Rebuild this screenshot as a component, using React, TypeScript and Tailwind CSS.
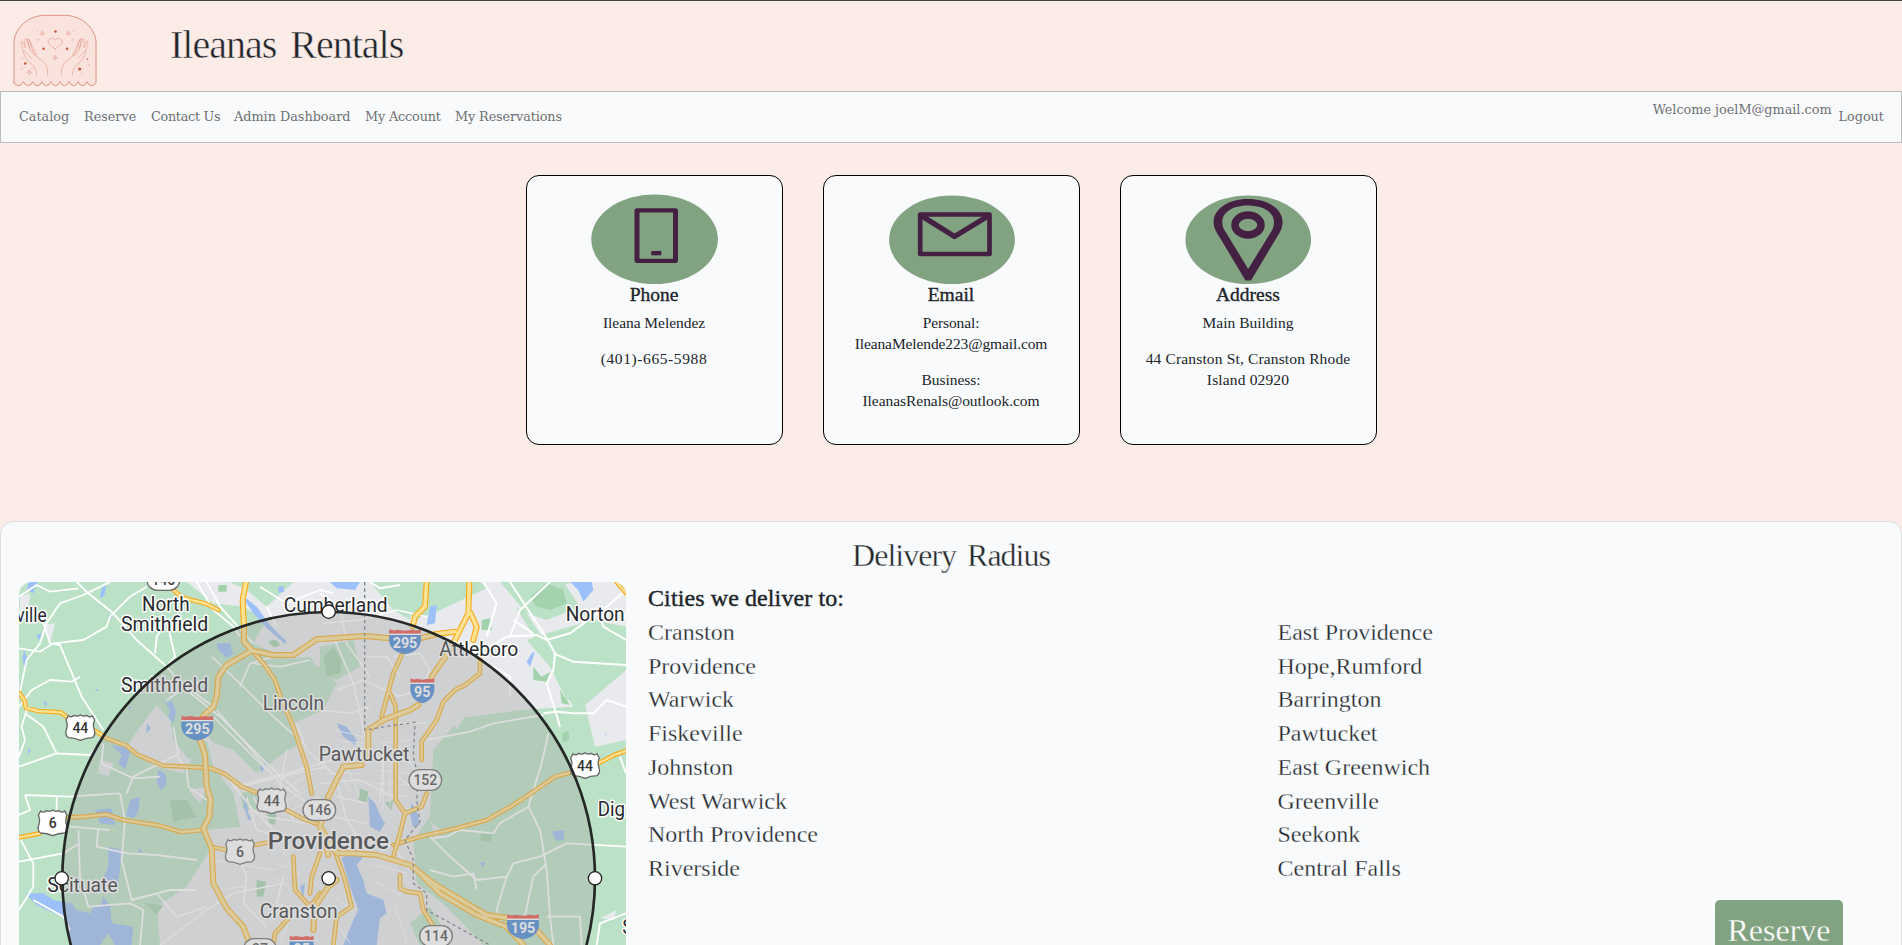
import React from "react";

const leftCities = ["Cranston", "Providence", "Warwick", "Fiskeville", "Johnston", "West Warwick", "North Providence", "Riverside"];
const rightCities = ["East Providence", "Hope,Rumford", "Barrington", "Pawtucket", "East Greenwich", "Greenville", "Seekonk", "Central Falls"];

function Hand() {
  return (
    <g>
      <path d="M111 224 C111 206 101 196 90 187 C76 174 71 160 68 142 C64 132 63 123 67 122 C71 123 72 133 76 141" />
      <path d="M144 224 C146 203 139 189 124 179 C112 172 104 163 98 149 C93 137 91 121 87 117 C83 117 86 130 90 144" />
      <path d="M76 141 C76 130 74 116 79 114 C83 116 84 132 90 146 C95 158 101 163 109 166 M81 118 C88 112 91 122 97 137 C102 149 107 157 110 163 M74 151 C81 161 88 166 95 174" />
    </g>
  );
}

function Logo() {
  return (
    <svg viewBox="40 42 253 218" className="h-[73px] w-[84px] shrink-0" fill="none" stroke="#df9c8d" strokeWidth="2" strokeLinecap="round">
      <path
        d="M43 248 V120 C50 80 84 48 132 45 H202 C250 49 283 80 290 120 V248 Q286 257 277 257 Q267 256 263 245 Q258 257 249 257 Q239 256 236 245 Q232 257 222 257 Q212 256 209 245 Q204 257 195 257 Q185 256 181 245 Q177 257 168 257 Q158 256 154 245 Q150 257 141 257 Q131 256 127 245 Q123 257 114 257 Q103 256 99 245 Q95 257 87 257 Q76 256 71 245 Q66 257 57 257 Q47 257 43 248 Z"
        fill="#fbe3dd"
        stroke="#d88472"
        strokeWidth="2.6"
      />
      <Hand />
      <g transform="translate(330 0) scale(-1 1)">
        <Hand />
      </g>
      <path d="M167 146 C156 138 146 133 146 124 C147 113 163 111 167 120 C172 111 187 113 188 124 C188 133 177 140 167 146 Z" />
      <g stroke="none" fill="#cb513c">
        <circle cx="168" cy="94" r="3.8" />
        <circle cx="132" cy="146" r="3.8" />
        <circle cx="203" cy="146" r="3.8" />
        <circle cx="77" cy="190" r="3.8" />
        <circle cx="241" cy="207" r="4.6" />
        <circle cx="264" cy="177" r="3" fill="#dc8d7c" />
      </g>
      <path d="M128 93 l2 5 5 2 -5 2 -2 5 -2 -5 -5 -2 5 -2z M207 93 l2 5 5 2 -5 2 -2 5 -2 -5 -5 -2 5 -2z M167 166 l2 5 5 2 -5 2 -2 5 -2 -5 -5 -2 5 -2z M89 210 l2 5 5 2 -5 2 -2 5 -2 -5 -5 -2 5 -2z" strokeWidth="1.8" />
      <path d="M113 92v2 M223 92v2 M112 119h6 M217 119h6 M67 175h3 M64 206h4 M96 205h2 M246 220h4 M266 194h4 M237 191h2" stroke="#e5a395" />
    </svg>
  );
}

function PhoneIcon() {
  return (
    <svg viewBox="0 0 127 90" className="h-[90px] w-[127px]">
      <ellipse cx="63.6" cy="45.3" rx="63.3" ry="44.9" fill="#82a382" />
      <path fillRule="evenodd" fill="#442142" d="M46 14.300 H84.500 Q87 14.300 87 17 V66 Q87 69 84.500 69 H46 Q43.500 69 43.500 66 V17 Q43.500 14.300 46 14.300 Z M48.500 18.500 V64.700 H82 V18.500 Z" />
      <rect x="60.300" y="57" width="10" height="4.300" fill="#442142" />
    </svg>
  );
}

function EmailIcon() {
  return (
    <svg viewBox="0 0 126 90" className="ml-px h-[90px] w-[126px]">
      <ellipse cx="63" cy="45.700" rx="62.900" ry="44.300" fill="#82a382" />
      <g fill="none" stroke="#442142" strokeLinejoin="round">
        <rect x="31.200" y="20.500" width="69.300" height="39.500" strokeWidth="4.700" />
        <path d="M32 21.500 L65.500 42.500 L100 21.500" strokeWidth="5.300" />
      </g>
    </svg>
  );
}

function PinIcon() {
  return (
    <svg viewBox="0 0 126 90" className="h-[90px] w-[126px]">
      <ellipse cx="63.200" cy="45.700" rx="62.800" ry="44.300" fill="#82a382" />
      <path d="M60.500 86.500 L34.500 43 C31.500 38.500 28.600 34 28.600 28 C28.600 15 43 5 63 5 C83 5 97.600 15 97.600 28 C97.600 34 95 38 92 43 L66 86.500 Z M63.200 75 L86 38 C88 35 89 32 89 28 C89 18 78 11.500 63 11.500 C48 11.500 37.300 18 37.300 28 C37.300 32 38.500 35 41 38.500 Z" fill="#442142" fillRule="evenodd" />
      <ellipse cx="63" cy="31" rx="13" ry="10" fill="none" stroke="#442142" strokeWidth="7.500" />
    </svg>
  );
}

function Roads({ d, w = 13 }: { d: string; w?: number }) {
  return (
    <g fill="none" strokeLinejoin="round" strokeLinecap="round">
      <path d={d} stroke="#f8ab1c" strokeWidth={w + 7} />
      <path d={d} stroke="#fde293" strokeWidth={w} />
    </g>
  );
}

function Us({ x, y, n }: { x: number; y: number; n: string }) {
  return (
    <g transform={`translate(${x} ${y})`}>
      <path d="M-36 -37 Q-27 -30 -19 -38 Q-9 -33 0 -40 Q9 -33 19 -38 Q27 -30 36 -37 L43 -24 Q36 -10 42 5 Q47 22 36 29 Q17 30 0 37 Q-17 30 -36 29 Q-47 22 -42 5 Q-36 -10 -43 -24 Z" fill="#fff" stroke="#666" strokeWidth="4" />
      <text y="14" textAnchor="middle" fontSize="42" fontWeight="500" fill="#333">{n}</text>
    </g>
  );
}

function Interstate({ x, y, n }: { x: number; y: number; n: string }) {
  const wide = n.length > 2;
  return (
    <g transform={`translate(${x} ${y})`}>
      <g transform={wide ? undefined : "scale(.75 1)"}>
        <path d="M-47 -23 H47 C53 6 38 28 0 35 C-38 28 -53 6 -47 -23 Z" fill="#4285d6" />
        <path d="M-47 -40 Q-32 -34 -23 -39 L0 -36 L23 -39 Q34 -34 47 -40 L48 -27 H-48 Z" fill="#ea4b45" />
        <path d="M-48 -25 H48" stroke="#fff" strokeWidth="4" />
      </g>
      <text y="16" textAnchor="middle" fontSize="43" fontWeight="700" fill="#fff">{n}</text>
    </g>
  );
}

function StateRoute({ x, y, n }: { x: number; y: number; n: string }) {
  return (
    <g transform={`translate(${x} ${y})`}>
      <rect x="-49" y="-31" width="98" height="62" rx="31" fill="#fff" stroke="#666" strokeWidth="4" />
      <text y="15" textAnchor="middle" fontSize="42" fontWeight="500" fill="#444">{n}</text>
    </g>
  );
}

function Place({ x, y, w, size = 58, weight = 400, children }: { x: number; y: number; w: number; size?: number; weight?: number; children: string }) {
  return (
    <text x={x} y={y} textLength={w} lengthAdjust="spacingAndGlyphs" fontSize={size} fontWeight={weight} fill="#27292c" stroke="#fff" strokeWidth="9" strokeLinejoin="round" paintOrder="stroke">
      {children}
    </text>
  );
}

function DeliveryMap() {
  return (
    <svg viewBox="57 216 1821 1089" className="block h-[363px] w-[607px] shrink-0 rounded-t-[13px] font-['Roboto',sans-serif]">
      <rect x="57" y="216" width="1821" height="1089" fill="#bbe2c6" />
      {/* built-up land */}
      <g fill="#e8eaed">
        <path d="M560 216 L690 216 L740 240 L800 290 L880 216 H1190 L1240 330 L1300 310 L1500 216 L1590 360 L1720 590 L1560 600 L1380 625 L1300 720 L1290 920 L1240 990 L1250 1120 L1340 1190 L1450 1305 H480 L470 1190 L560 1130 L630 1020 L620 960 L720 950 L700 850 L640 770 L620 690 L700 720 L770 790 L850 730 L900 700 L880 640 L970 600 L1010 520 L960 470 L850 440 L760 400 L800 330 L730 290 L640 280 Z" />
        <path d="M1440 216 L1520 216 L1650 420 L1710 460 L1878 480 L1755 585 L1785 710 L1878 690 V216 H1850 L1720 216 L1640 240 L1560 300 L1500 260 Z" />
        <path d="M470 585 L510 630 L520 690 L560 740 L550 790 L470 770 L380 710 L410 665 Z M300 750 L340 760 L325 800 L295 790 Z M60 260 L90 250 L85 310 L60 340 Z M130 345 L165 340 L150 400 Z M565 840 L620 830 L600 880 Z" />
        <path d="M1350 625 L1400 610 L1370 660 Z M1290 930 L1320 960 L1310 990 Z M1800 1225 L1850 1200 L1840 1230 Z M545 745 L575 745 L565 770 Z M575 640 L600 650 L640 700 L600 690 Z" />
      </g>
      {/* woodland */}
      <g fill="#bbe2c6">
        <path d="M700 460 L830 450 L930 440 L970 500 L930 600 L820 650 L780 590 L700 610 L720 690 L820 720 L790 770 L690 700 L650 620 Z M960 410 L1060 390 L1080 470 L1010 510 L960 490 Z M720 850 L820 830 L800 900 L730 900 Z" />
        <path d="M1110 216 H1190 L1240 270 L1230 330 L1180 300 Z M1500 216 H1690 L1740 290 L1640 330 L1580 310 Z M1580 390 L1640 370 L1780 330 L1878 350 V480 L1755 580 L1700 570 L1650 470 Z M1230 1240 L1290 1190 L1350 1290 L1260 1305 Z" />
      </g>
      <g fill="#a3d3ad">
        <path d="M1590 260 L1640 220 L1690 240 L1700 280 L1650 300 L1610 290 Z M1600 470 L1625 500 L1650 485 L1640 515 L1600 510 Z M1445 330 L1470 325 L1475 360 L1445 360 Z M1680 540 L1710 585 L1685 580 Z M1685 670 L1705 660 L1708 690 L1690 698 Z" />
        <path d="M970 440 L1000 410 L1025 450 L1020 490 L980 500 Z M510 870 L560 870 L590 920 L520 935 Z M800 905 L830 900 L825 945 L808 940 Z M1080 835 L1105 845 L1100 880 L1075 870 Z M1445 970 L1480 965 L1470 995 L1440 990 Z M770 1110 L798 1115 L790 1160 L770 1160 Z M805 395 Q830 380 840 405 Q820 420 805 395 Z M1155 880 L1180 870 L1175 900 Z M435 1180 L490 1185 L470 1215 Z M655 225 L680 225 L680 245 L655 245 Z" />
      </g>
      {/* water */}
      <g fill="#9cc0f9">
        <path d="M85 216 H112 L100 250 L82 240 Z M305 235 L320 225 L312 258 L300 265 Z M72 420 L83 450 L72 470 L68 445 Z M650 400 L690 400 L700 430 L680 445 L655 420 Z M480 555 L500 580 L515 570 L528 605 L520 640 L505 620 L510 600 Z M335 705 L395 715 L385 745 L375 780 L355 760 L365 735 Z M390 870 L420 860 L415 905 L400 925 L378 915 Z M475 780 L495 790 L500 820 L485 842 L470 820 Z M835 230 L850 228 L852 245 L835 248 Z M385 590 L393 590 L390 605 Z M720 250 L770 290 L810 345 L860 395 L855 402 L800 355 L760 310 Z M440 640 L452 655 L440 670 Z" />
        <path d="M285 900 L335 895 L345 945 L300 940 Z M325 1010 L365 1020 L355 1120 L300 1125 L325 1070 Z M75 1150 L130 1150 L160 1170 L215 1180 L230 1200 L270 1210 L280 1190 L300 1190 L310 1160 L330 1185 L335 1240 L400 1250 L395 1305 H345 L325 1270 L300 1305 H210 L195 1225 L110 1185 Z" />
        <path d="M1105 860 L1125 880 L1140 915 L1155 940 L1140 965 L1110 950 Z M1025 1045 L1060 1020 L1090 1040 L1070 1065 L1090 1110 L1100 1150 L1150 1170 L1160 1210 L1140 1225 L1130 1305 H1030 L1060 1230 L1075 1200 L1050 1130 Z M1235 880 L1250 900 L1260 945 L1238 950 L1230 910 Z M1655 965 L1693 960 L1690 990 L1668 992 Z M1710 216 H1775 L1780 240 L1750 275 L1735 240 Z M990 216 H1080 L1065 240 L1010 235 Z M1290 290 L1310 285 L1305 340 L1280 345 Z M1595 430 L1605 425 L1590 470 L1580 455 Z M1010 640 L1040 650 L1070 690 L1065 705 L1030 680 Z M1440 1060 L1455 1055 L1450 1070 Z M1815 675 L1820 665 L1815 685 Z" />
        <path d="M735 850 L745 910 L755 930 L745 930 L732 890 Z M780 770 L805 750 L785 790 Z M900 1130 L915 1120 L910 1165 Z M110 375 l14 -5 -6 22z M325 315 l14 6 -12 5z M285 535 l12 6 -8 2z M130 572 l12 8 -6 12z M85 715 l8 6 -8 14z M280 720 l12 -4 -6 18z M415 1015 l14 8 -10 6z" />
      </g>
      {/* minor streets */}
      <g fill="none" stroke="#fff" strokeWidth="4.5" strokeLinejoin="round">
        <path d="M57 260 L110 225 L150 245 L235 235 M330 216 L250 255 L180 280 L140 340 L120 400 L80 450 L57 560 M230 216 L265 250 L340 310 L410 390 L500 470 L560 540 L660 620 L800 760 L900 850 M130 340 L150 400 L180 405 L245 560 L310 660 M57 415 L120 425 L160 400 L250 390 L320 350 L330 320 L390 260 L440 230 M57 590 L95 540 L150 510 L215 515 L240 500 M80 600 L65 650 L75 690 L57 740 M75 610 L130 650 L170 730 L57 770 M170 730 L270 735 L300 700 M75 855 L210 860 L280 855 L360 850 M75 855 L90 900 L57 915" strokeWidth="5.500" />
        <path d="M57 980 L100 1060 L100 1130 L57 1200 M57 1055 L190 1030 L240 1000 M235 960 L240 1100 L265 1190 L390 1180 L430 1200 L420 1305 M100 1170 L190 1220 L210 1260 M295 955 L290 1010 L380 1030 L470 1035 M360 850 L375 930 L365 1050 L395 1170 L510 1140 L590 1140 M590 216 L640 300 L700 350 L720 380 M465 430 L470 380 L500 330 L525 440 L500 470 M380 850 L400 800 L480 760 L530 735 L560 780 L565 830 L620 870 M520 650 L535 735 M620 216 L660 290 L760 400 M780 230 L860 280 L960 240 L1000 250 M800 290 L830 350 M210 950 L330 960 M500 570 L560 530 L640 590 M470 1035 L590 1050 M170 860 L170 900 M310 700 L305 760 L400 805 L480 800" strokeWidth="5.500" />
        <path d="M635 440 L730 530 L820 620 L910 700 M640 620 L800 780 M650 600 L840 820 L950 900 M760 460 L840 470 L930 450 M720 530 L750 460 L820 440 M700 830 L900 780 L1060 730 M680 800 L760 900 L860 1000 M720 830 L840 800 L980 770 M860 720 L840 830 L880 930 M890 640 L920 720 L1010 800 M740 860 L770 960 L840 980 M760 860 L790 920 L930 940 M470 1150 L530 1220 L620 1190 M480 1305 L620 1200 L700 1150 L850 1120 M850 1100 L830 1180 L950 1220 M700 1010 L740 1100 L730 1180 L800 1250" />
        <path d="M960 250 L1020 290 L1040 400 L1110 500 M970 340 L1080 330 L1190 300 L1280 320 M1010 540 L1090 510 L1200 560 M1180 440 L1260 430 L1290 480 L1260 540 L1190 560 M1000 380 L1060 520 L1100 700 M1100 440 L1160 440 L1200 500 M960 600 L1050 610 L1110 590 M960 820 L1080 810 L1180 860 M1010 810 L1040 930 L1100 1020 M1190 700 L1280 830 M1190 800 L1260 850 M1010 860 L1100 880 M1000 920 L1100 940 M1050 990 L1180 1010 L1230 1080 M1100 700 L1150 760 L1140 880 M1180 640 L1280 640" />
        <path d="M1110 216 L1140 235 L1200 225 M1460 380 L1490 280 L1450 216 M1470 410 L1520 380 L1610 375 L1640 390 L1710 370 L1820 290 L1878 240 M1530 216 L1640 385 L1665 430 L1660 480 L1640 520 L1665 600 L1680 650 M1660 430 L1720 455 L1878 465 M1790 300 L1810 350 L1878 390 M1480 470 L1530 500 L1530 560 M1630 610 L1670 605 L1720 610 L1780 610 L1820 570 L1878 590 M1530 380 L1560 300 L1650 216 M1540 330 L1600 370" strokeWidth="6" />
        <path d="M1280 690 L1410 665 L1480 640 L1630 615 M1645 670 L1625 760 L1585 890 L1620 960 L1640 1080 L1650 1220 L1660 1305 M1290 985 L1340 980 L1380 960 L1480 970 L1500 940 L1585 890 M1430 1110 L1520 1100 L1540 1060 L1620 1040 L1700 1000 L1878 1010 M1520 1100 L1490 1200 L1510 1250 M1290 1080 L1360 1100 L1420 1090 L1430 1140 M1570 1240 L1600 1100 L1640 1060 M1640 1220 H1740 L1745 1305 M1790 1305 L1800 1240 L1878 1210 M1860 740 L1878 790 M1290 980 L1350 1040 L1430 1110" strokeWidth="5.500" />
      </g>
      {/* local grids */}
      <g fill="none" stroke="#fff" strokeWidth="3" opacity=".85">
        <path d="M820 820 L930 760 M830 850 L940 790 M840 880 L950 830 M850 910 L960 860 M1000 660 L1090 680 M1000 690 L1090 700 M980 790 L1090 790 M1010 770 L1050 850 M1040 770 L1080 860 M1140 700 L1230 690 M1120 780 L1230 790 M1120 820 L1230 825 M1130 850 L1230 860 M1150 730 V900 M1170 740 V890 M1110 1060 L1220 1090 M1120 1110 L1210 1160 M840 1010 L900 1100 M820 1060 L900 1080 M800 1090 L880 1140 M920 1100 L960 1130 M640 1050 L820 1080 M980 990 L1080 1010 M1000 1160 L1060 1200 M640 1140 L740 1130 M880 1200 L840 1300 M1010 1240 L1050 1300 M1180 1170 L1220 1300" />
      </g>
      {/* main roads */}
      <Roads w={7} d="M57 548 L73 570 L78 594 L115 603 L182 607 L202 622 M285 662 L320 685 L378 706 L410 733 L490 767 L560 770 L634 775 L675 792 L725 830 L770 848 M860 900 L905 925 L960 945 M57 982 L120 970 M205 922 L255 920 L318 913 L370 930 L480 947 L543 966 L608 960 M633 1010 L680 1020 M765 1005 L840 990 M1878 722 L1843 735 L1795 760 M1720 785 L1665 800 L1600 845 L1540 885 L1460 930 L1370 955 L1260 980 L1180 1005 M1200 1095 V1135 L1220 1145 L1260 1150 L1270 1200 L1300 1250" />
      <Roads w={7} d="M520 240 L545 262 L620 282 L655 300 M755 420 L790 460 L825 510 L845 570 L880 650 L920 770 L935 850 M1440 440 L1440 490 L1395 525 L1365 540 L1330 575 L1310 630 L1265 695 L1265 750 M1280 850 L1265 890 L1215 910 M1187 590 V870 L1215 910 L1200 970 L1180 1040 M1145 620 L1180 490 L1205 435 M1170 550 L1187 590 M930 1150 L935 1100 L960 1030 M880 1040 L885 1140 L930 1190 L960 1150 M1000 1010 L1035 1110 L1055 1190 L1010 1220 L1000 1305 M820 1305 L825 1270 L870 1220 M1850 216 L1878 250" />
      <Roads w={11} d="M738 216 L728 270 L732 350 L732 395 L755 420 M655 500 L650 560 L640 590 L608 620 M655 500 L680 465 L755 422 L820 435 L880 435 L950 388 L1095 378 L1170 385 M600 690 L615 735 L620 830 L632 870 L628 920 L610 955 L635 1015 L640 1120 L680 1195 L730 1250 L750 1305 M1238 350 L1245 320 L1275 290 L1280 216 M1408 216 L1405 310 L1350 420 L1295 500 M1412 310 L1430 350 L1420 390 M1260 385 L1310 372 L1365 365 M1255 585 L1230 600 L1150 630 L1105 660 L1105 740 M1085 765 L1030 770 L985 860 L960 950 L1010 1030 L1060 1030 L1130 1035 L1230 1065 L1300 1120 L1400 1180 L1460 1215 L1530 1225 M1240 1070 L1320 1150 L1430 1215 L1520 1250 L1570 1305 M1600 1250 L1650 1305 M960 950 L985 1035 M940 1260 L945 1190 L985 1130 L1010 1110" />
      <path d="M1094 216 V660 L1170 648 L1245 637 L1240 740 L1255 800 L1250 870 L1260 935 L1215 990 L1240 1050 L1240 1120 L1280 1150 L1280 1200 L1470 1305" fill="none" stroke="#777b80" strokeWidth="4" strokeDasharray="10 9" />
      <Us x={241} y={654} n="44" />
      <Us x={158} y={940} n="6" />
      <Us x={815} y={874} n="44" />
      <Us x={720} y={1026} n="6" />
      <Us x={1755} y={768} n="44" />
      <Interstate x={592} y={657} n="295" />
      <Interstate x={1215} y={398} n="295" />
      <Interstate x={1267} y={545} n="95" />
      <Interstate x={1569} y={1253} n="195" />
      <Interstate x={905} y={1317} n="95" />
      <StateRoute x={490} y={210} n="146" />
      <StateRoute x={958} y={900} n="146" />
      <StateRoute x={1276} y={810} n="152" />
      <StateRoute x={1308} y={1278} n="114" />
      <StateRoute x={780} y={1317} n="37" />
      <Place x={49} y={335} w={91}>ville</Place>
      <Place x={426} y={304} w={143}>North</Place>
      <Place x={363} y={363} w={262}>Smithfield</Place>
      <Place x={363} y={545} w={262}>Smithfield</Place>
      <Place x={788} y={600} w={184}>Lincoln</Place>
      <Place x={851} y={306} w={312}>Cumberland</Place>
      <Place x={1318} y={437} w={237}>Attleboro</Place>
      <Place x={1697} y={333} w={177}>Norton</Place>
      <Place x={956} y={753} w={272}>Pawtucket</Place>
      <Place x={803} y={1018} w={364} size={72} weight={500}>Providence</Place>
      <Place x={142} y={1145} w={211}>Scituate</Place>
      <Place x={779} y={1223} w={234}>Cranston</Place>
      <Place x={1793} y={919} w={82}>Dig</Place>
      <Place x={1867} y={1272} w={34}>S</Place>
      <circle cx="986" cy="1105" r="800" fill="#a6a6a6" fillOpacity=".38" />
      <circle cx="986" cy="1105" r="799" fill="none" stroke="#252827" strokeWidth="8" />
      <g fill="#fff" stroke="#222" strokeWidth="4">
        <circle cx="986" cy="305" r="20" />
        <circle cx="185" cy="1105" r="20" />
        <circle cx="986" cy="1105" r="20" />
        <circle cx="1785" cy="1105" r="20" />
      </g>
    </svg>
  );
}

function Card({ icon, title, children }: { icon: React.ReactNode; title: string; children: React.ReactNode }) {
  return (
    <article className="flex h-[270px] w-[257px] flex-col items-center rounded-[13px] border border-black bg-[#f8fafc] pt-[18px] text-center text-[15.500px] leading-[21.330px]">
      {icon}
      <h2 className="-mt-px mb-[6px] h-[23px] text-[19.500px] leading-[23px] [-webkit-text-stroke:0.35px_#212529]">{title}</h2>
      {children}
    </article>
  );
}

export default function App() {
  return (
    <div className="h-[945px] w-full overflow-hidden border-t border-[#444] bg-[#fcece8] font-['Liberation_Serif',serif] text-[#212529]">
      <header className="flex h-[90px] items-start pl-[13px] pt-[13px]">
        <Logo />
        <h1 className="ml-[73px] mt-[7px] text-[40px] leading-[48px] tracking-[-1px] [-webkit-text-stroke:0.5px_#fcece8] [word-spacing:5px]">Ileanas Rentals</h1>
      </header>
      <nav className="flex h-[52px] items-center justify-between border border-[#bbbcbe] bg-[#f8fafc] pl-[18px] pr-[17px] font-['DejaVu_Serif',serif] text-[12.800px] text-[#6f7072]">
        <div className="flex gap-[14px]">
          <a className="w-[51px] whitespace-nowrap">Catalog</a>
          <a className="w-[53px] whitespace-nowrap">Reserve</a>
          <a className="w-[69px] whitespace-nowrap tracking-[-0.300px]">Contact Us</a>
          <a className="w-[117px] whitespace-nowrap">Admin Dashboard</a>
          <a className="w-[76px] whitespace-nowrap tracking-[-0.150px]">My Account</a>
          <a className="whitespace-nowrap tracking-[-0.100px]">My Reservations</a>
        </div>
        <div className="flex items-center gap-[7px]">
          <span className="pb-[14px]">Welcome joelM@gmail.com</span>
          <a>Logout</a>
        </div>
      </nav>
      <section className="mt-[32px] flex justify-center gap-[40px]">
        <Card icon={<PhoneIcon />} title="Phone">
          <p className="mb-[14.200px] tracking-[-0.050px]">Ileana Melendez</p>
          <p className="tracking-[0.600px]">(401)-665-5988</p>
        </Card>
        <Card icon={<EmailIcon />} title="Email">
          <p className="mb-[14.200px] tracking-[-0.110px]">Personal:<br />IleanaMelende223@gmail.com</p>
          <p className="tracking-[-0.050px]">Business:<br />IleanasRenals@outlook.com</p>
        </Card>
        <Card icon={<PinIcon />} title="Address">
          <p className="mb-[14.200px]">Main Building</p>
          <p className="tracking-[0.150px]">44 Cranston St, Cranston Rhode<br />Island 02920</p>
        </Card>
      </section>
      <section className="mt-[76px] h-[460px] rounded-t-[13px] border border-[#dedfe0] bg-[#f8fafc] px-[18px] pt-[14px]">
        <h2 className="h-[46px] text-center text-[32px] leading-[39px] tracking-[-1px] [-webkit-text-stroke:0.4px_#f8fafc] [word-spacing:4px]">Delivery Radius</h2>
        <div className="flex">
          <DeliveryMap />
          <div className="flex grow flex-col pl-[22px] text-[24px] leading-[33.750px]">
            <h3 className="tracking-[0.100px] [-webkit-text-stroke:0.4px_#212529]">Cities we deliver to:</h3>
            <div className="grid grid-cols-[629.500px_1fr] [-webkit-text-stroke:0.3px_#f8fafc]">
              <ul>{leftCities.map((c) => <li key={c}>{c}</li>)}</ul>
              <ul>{rightCities.map((c) => <li key={c}>{c}</li>)}</ul>
            </div>
            <button className="mr-[40px] mt-[14px] h-[60px] w-[128px] self-end rounded-[5px] bg-[#82a382] text-[32px] leading-[48px] text-white [-webkit-text-stroke:0.3px_#82a382]">Reserve</button>
          </div>
        </div>
      </section>
    </div>
  );
}
